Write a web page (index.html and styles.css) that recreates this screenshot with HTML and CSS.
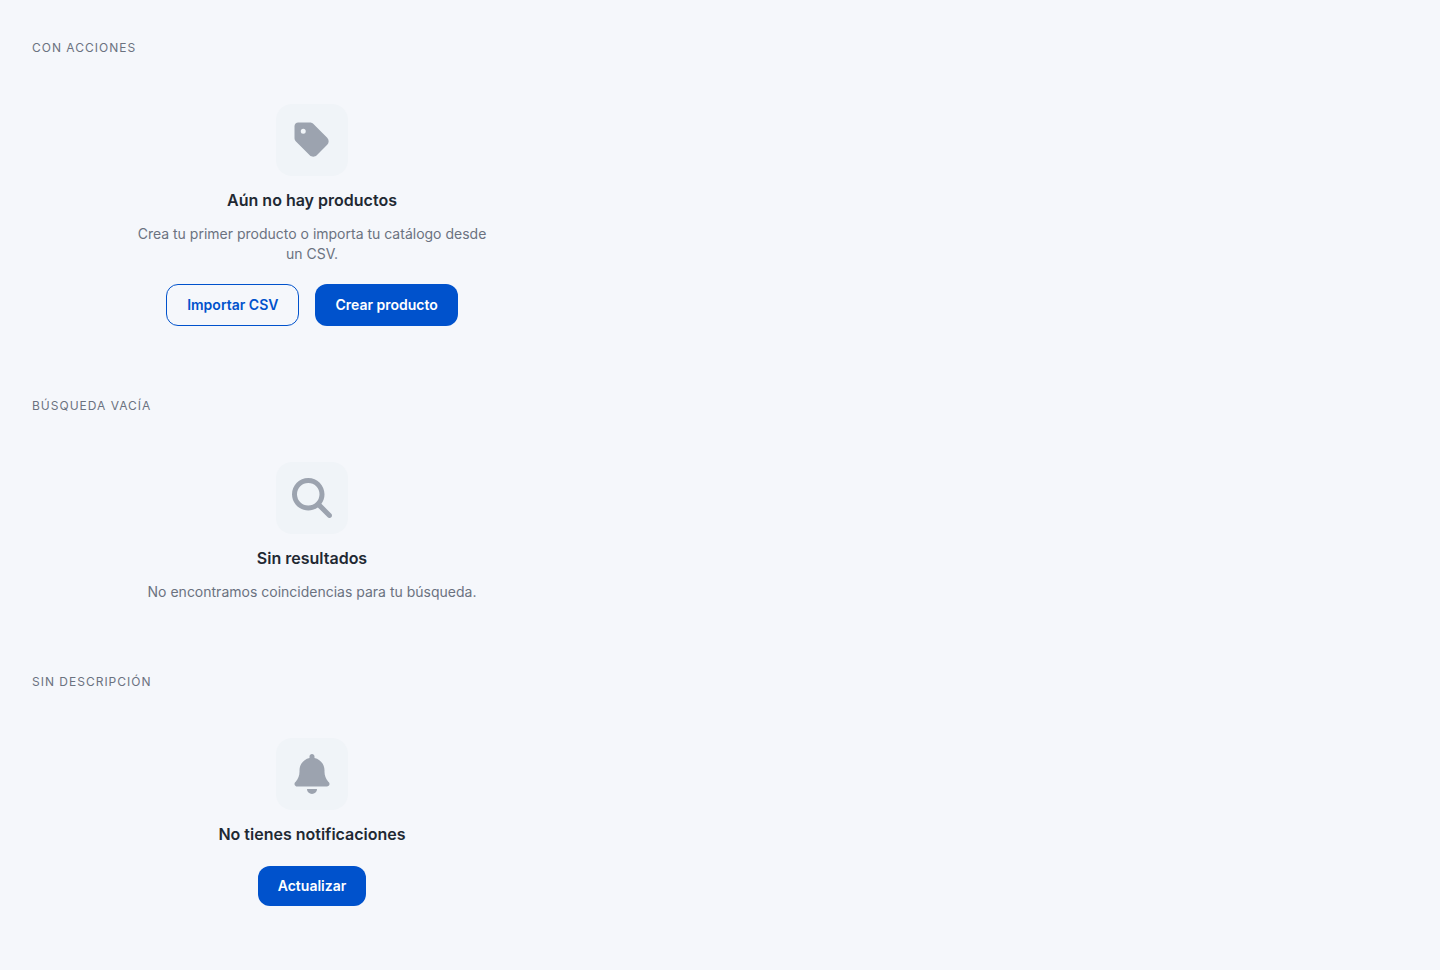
FILE: index.html
```html
<!DOCTYPE html>
<html lang="es">
<head>
    <meta charset="UTF-8">
    <meta name="viewport" content="width=device-width, initial-scale=1.0">
    <title>Estados vacíos</title>
    <link rel="stylesheet" href="styles.css">
</head>
<body>
    <main class="page">

        <section class="demo">
            <p class="demo-label">Con acciones</p>
            <div class="empty-state">
                <div class="empty-icon">
                    <svg viewBox="0 0 448 512" aria-hidden="true"><path d="M0 80V229.5c0 17 6.7 33.3 18.7 45.3l176 176c25 25 65.5 25 90.5 0L418.7 317.3c25-25 25-65.5 0-90.5l-176-176c-12-12-28.3-18.7-45.3-18.7H48C21.5 32 0 53.5 0 80zm112 32a32 32 0 1 1 0 64 32 32 0 1 1 0-64z"/></svg>
                </div>
                <h2 class="empty-title">Aún no hay productos</h2>
                <p class="empty-text">Crea tu primer producto o importa tu catálogo desde un CSV.</p>
                <div class="empty-actions">
                    <button type="button" class="btn btn-outline">Importar CSV</button>
                    <button type="button" class="btn btn-primary">Crear producto</button>
                </div>
            </div>
        </section>

        <section class="demo">
            <p class="demo-label">Búsqueda vacía</p>
            <div class="empty-state">
                <div class="empty-icon">
                    <svg viewBox="0 0 512 512" aria-hidden="true"><path d="M416 208c0 45.9-14.9 88.3-40 122.7L502.6 457.4c12.5 12.5 12.5 32.8 0 45.3s-32.8 12.5-45.3 0L330.7 376c-34.4 25.2-76.8 40-122.7 40C93.1 416 0 322.9 0 208S93.1 0 208 0S416 93.1 416 208zM208 352a144 144 0 1 0 0-288 144 144 0 1 0 0 288z"/></svg>
                </div>
                <h2 class="empty-title">Sin resultados</h2>
                <p class="empty-text">No encontramos coincidencias para tu búsqueda.</p>
            </div>
        </section>

        <section class="demo">
            <p class="demo-label">Sin descripción</p>
            <div class="empty-state">
                <div class="empty-icon">
                    <svg viewBox="0 0 448 512" aria-hidden="true"><path d="M224 0c-17.7 0-32 14.3-32 32V51.2C119 66 64 130.6 64 208v18.8c0 47-17.3 92.4-48.5 127.6l-7.4 8.3c-8.4 9.4-10.4 22.9-5.3 34.4S19.4 416 32 416H416c12.6 0 24-7.4 29.2-18.9s3.1-25-5.3-34.4l-7.4-8.3C401.3 319.2 384 273.9 384 226.8V208c0-77.4-55-142-128-156.8V32c0-17.7-14.3-32-32-32zm45.3 493.3c12-12 18.7-28.3 18.7-45.3H224 160c0 17 6.7 33.3 18.7 45.3s28.3 18.7 45.3 18.7s33.3-6.7 45.3-18.7z"/></svg>
                </div>
                <h2 class="empty-title">No tienes notificaciones</h2>
                <div class="empty-actions">
                    <button type="button" class="btn btn-primary">Actualizar</button>
                </div>
            </div>
        </section>

    </main>
</body>
</html>
```
FILE: styles.css
```css
body {
    margin: 0;
    font-family: Inter, "Liberation Sans", sans-serif;
    -webkit-font-smoothing: antialiased;
    background-color: #f5f7fb;
    color: #1f2933;
}

.page {
    display: flex;
    flex-direction: column;
    gap: 24px;
    max-width: 560px;
    padding: 40px 32px 0;
}

.demo-label {
    margin: 0;
    font-size: 12px;
    line-height: 16px;
    letter-spacing: 1px;
    text-transform: uppercase;
    color: #6b7280;
}

.empty-state {
    display: flex;
    flex-direction: column;
    align-items: center;
    gap: 12px;
    padding: 48px 24px;
    text-align: center;
}

.empty-icon {
    display: flex;
    align-items: center;
    justify-content: center;
    width: 72px;
    height: 72px;
    border-radius: 16px;
    background-color: #f0f4f8;
}

.empty-icon svg {
    width: 40px;
    height: 40px;
    fill: #9ca3af;
}

.empty-title {
    margin: 0;
    font-size: 16px;
    font-weight: 600;
    line-height: 24px;
}

.empty-text {
    margin: 0;
    max-width: 360px;
    font-size: 14px;
    line-height: 20px;
    color: #6b7280;
}

.empty-actions {
    display: flex;
    flex-wrap: wrap;
    justify-content: center;
    gap: 16px;
    margin-top: 8px;
}

.btn {
    padding: 10px 20px;
    border: none;
    border-radius: 12px;
    font-family: inherit;
    font-size: 14px;
    font-weight: 600;
    line-height: 20px;
    cursor: pointer;
}

.btn-primary {
    background-color: #0052cc;
    color: #fff;
}

.btn-outline {
    border: 1px solid #0052cc;
    background-color: transparent;
    color: #0052cc;
}

.btn-primary:hover {
    background-color: #0047b3;
}
```
